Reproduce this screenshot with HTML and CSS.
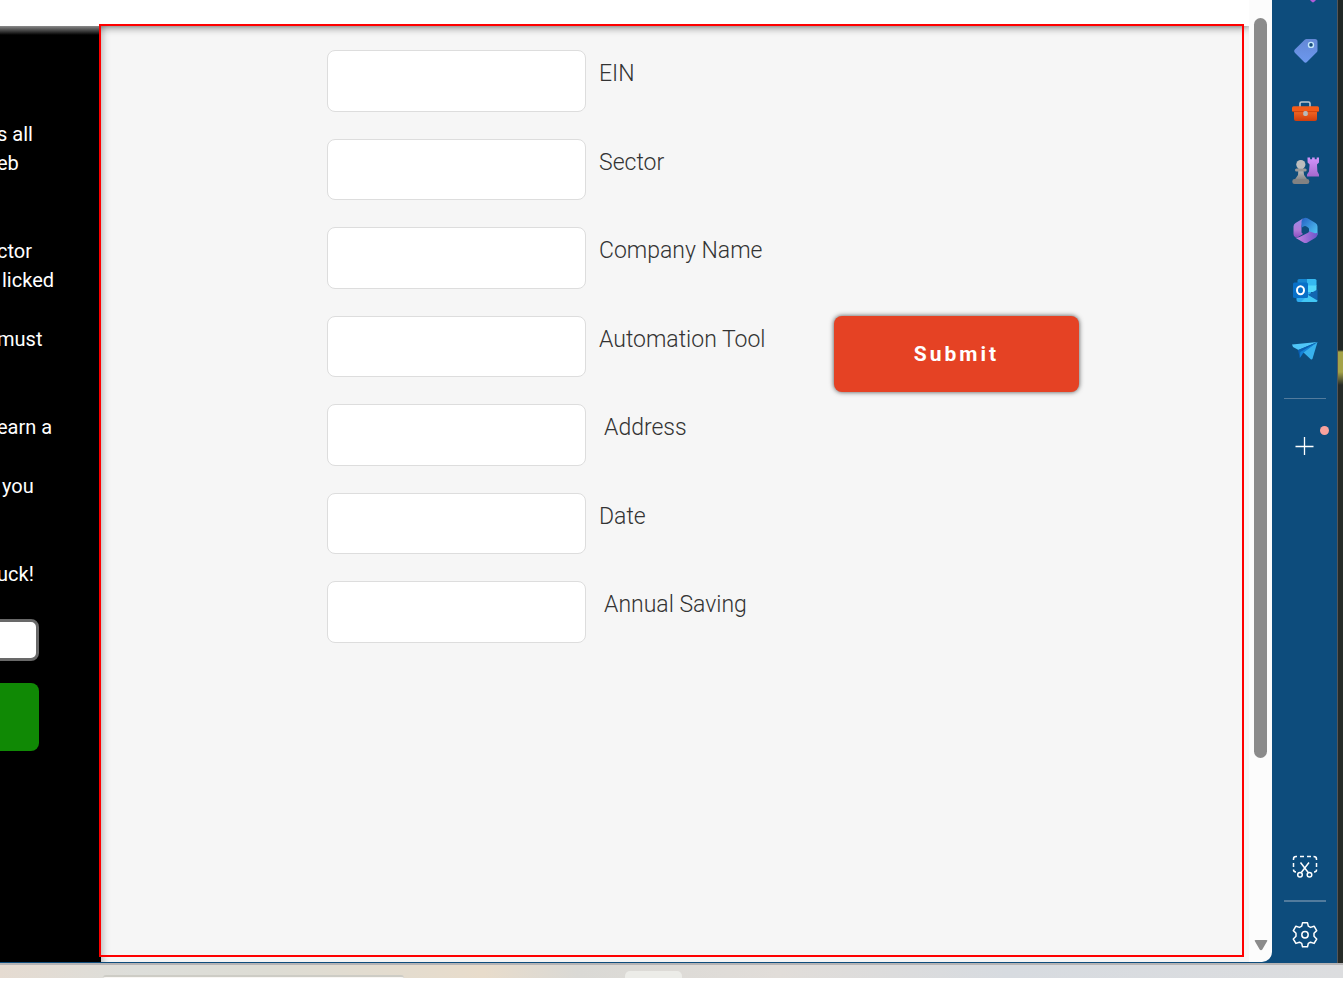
FILE: index.html
```html
<!DOCTYPE html>
<html lang="en">
<head>
<meta charset="utf-8">
<title>Automation Challenge</title>
<link rel="stylesheet" href="styles.css">
</head>
<body>
<div class="desktop">
  <div class="browser">
    <div class="page">
      <header class="page-header"></header>
      <div class="page-body">
        <aside class="instructions">
          <p>s all<br>eb</p>
          <p class="spaced">ctor<br><span class="word">licked</span></p>
          <p>must</p>
          <p class="spaced">earn a</p>
          <p><span class="word">you</span></p>
          <p class="spaced">uck!</p>
          <input class="answer" type="text" aria-label="Answer">
          <button class="start" type="button" aria-label="Start"></button>
        </aside>
        <main class="challenge">
          <form class="form">
            <input class="field" id="ein" type="text"><label class="label" for="ein">EIN</label>
            <input class="field" id="sector" type="text"><label class="label" for="sector">Sector</label>
            <input class="field" id="company" type="text"><label class="label" for="company">Company Name</label>
            <input class="field" id="tool" type="text"><label class="label" for="tool">Automation Tool</label>
            <input class="field" id="address" type="text"><label class="label indented" for="address">Address</label>
            <input class="field" id="date" type="text"><label class="label" for="date">Date</label>
            <input class="field" id="saving" type="text"><label class="label indented" for="saving">Annual Saving</label>
            <button class="submit" type="button">Submit</button>
          </form>
        </main>
      </div>
      <div class="highlight"></div>
    </div>
    <div class="scrollbar">
      <div class="thumb"></div>
      <svg class="arrow" viewBox="0 0 14 12"><path d="M1.500 1h11q1.400 0 .6 1.200L8.300 10.500q-1.300 1.600-2.600 0L.9 2.200Q.1 1 1.500 1z" fill="#8b8b8b"/></svg>
    </div>
    <nav class="sidebar">
      <button class="tool first" type="button" aria-label="Copilot"><svg viewBox="0 0 28 28"><path d="M18 23h8l-3 3q-1 .8-2 0z" fill="#b05cd8"/></svg></button>
      <button class="tool" type="button" aria-label="Shopping"><svg viewBox="0 0 28 28">
        <defs><linearGradient id="tag" x1="0" y1="0" x2="0" y2="1"><stop offset="0" stop-color="#6488d6"/><stop offset="1" stop-color="#6c98ee"/></linearGradient></defs>
        <path d="M15.500 3h8.500q2.500 0 2.500 2.500v9q0 1-.8 1.800l-9.500 9.500q-1.700 1.700-3.400 0l-9-9q-1.500-1.600 0-3.200l9.900-9.800q.8-.8 1.800-.8z" fill="url(#tag)"/><circle cx="20" cy="8.900" r="2.500" fill="#174c7b" stroke="#c5e8fa" stroke-width="1.400"/></svg></button>
      <button class="tool" type="button" aria-label="Tools"><svg viewBox="0 0 28 28">
        <defs><linearGradient id="box" x1="0" y1="0" x2="0" y2="1"><stop offset="0" stop-color="#f66c27"/><stop offset="1" stop-color="#cf3d0d"/></linearGradient></defs>
        <path d="M9 11V7.500q0-1.500 1.500-1.500h7q1.500 0 1.500 1.500V11" fill="none" stroke="#bdc5ca" stroke-width="1.600"/><path d="M3 14h23v9q0 2-2 2H5q-2 0-2-2z" fill="url(#box)"/><rect x="1" y="10.300" width="27" height="5.500" rx="1.500" fill="#f35b19"/><path d="M1.500 15.600h26" stroke="#c43d0b" stroke-width=".8"/><rect x="12.200" y="15" width="4.600" height="5" rx="1.700" fill="#b8babb"/></svg></button>
      <button class="tool" type="button" aria-label="Games"><svg viewBox="0 0 28 28">
        <defs><linearGradient id="pawn" x1="0" y1="0" x2="0" y2="1"><stop offset="0" stop-color="#cbcbcb"/><stop offset="1" stop-color="#858585"/></linearGradient><linearGradient id="rook" x1="0" y1="0" x2="0" y2="1"><stop offset="0" stop-color="#d395fc"/><stop offset="1" stop-color="#a568cd"/></linearGradient></defs>
        <path d="M16.500 1.500h2.600v1.800h2V1.500h2.600v1.800h2V1.500h2.300v5l-2 2 .4 7 1.600 3v2H16v-2l2-3 .6-7-2-2z" fill="url(#rook)"/><circle cx="9.800" cy="8.600" r="4.600" fill="#bdbdbd"/><path d="M7.500 12h4.600l1 7 3.500 5H3.500L7 19z" fill="url(#pawn)"/><rect x="4" y="12.500" width="11.700" height="3" rx="1.500" fill="#989898"/><rect x="1.300" y="23" width="17" height="5" rx="2.300" fill="#828282"/></svg></button>
      <button class="tool" type="button" aria-label="Microsoft 365"><svg viewBox="0 0 28 28">
        <defs><linearGradient id="ma" x1="0" y1="0" x2="0" y2="1"><stop offset="0" stop-color="#9b8ae6"/><stop offset=".6" stop-color="#b07bd8"/><stop offset="1" stop-color="#8c4ec0"/></linearGradient><linearGradient id="mb" x1="0" y1="0" x2="1" y2="1"><stop offset="0" stop-color="#2460c4"/><stop offset="1" stop-color="#56cdf7"/></linearGradient><linearGradient id="mc" x1="0" y1="0" x2="1" y2="0"><stop offset="0" stop-color="#cd87e2"/><stop offset="1" stop-color="#6d55c9"/></linearGradient></defs>
        <path d="M12 2.500 4.500 7Q2.500 8.200 2.500 10.500v7.500q0 2 1.500 3 2 1 4-.5l4-2.500-1.500-1.500v-6z" fill="url(#ma)"/><path d="M12.500 2.200q2-1 4 0L24.500 7q2 1.200 2 3.500v7q0 1.300-.8 2.300L18 15.500V13q0-1-1-1.600l-2-1.200q-1-.5-2 0l-2.500 1.500V5.500q0-2 2-3.300z" fill="url(#mb)"/><path d="m4 21.500 8.500 5q2 1.200 4 0l8-4.700q2-1.200 2-3.500v-2q-1.200 1.500-3.200.7L18 15.300q-.3 1-1 1.500L8.500 21Q6 22.200 4 21.500z" fill="url(#mc)"/></svg></button>
      <button class="tool" type="button" aria-label="Outlook"><svg viewBox="0 0 28 28">
        <path d="M6.500 4.500Q6.500 3 8 3h8v7H6.500z" fill="#1686d2"/><path d="M16 3h8q1.500 0 1.500 1.500V10H16z" fill="#35b9f1"/><path d="M16 9.500h9.500V16H16z" fill="#52d8fc"/><path d="M5.500 16H20l4 10H7.500q-2 0-2-2z" fill="#2eacf0"/><path d="M26.500 13.500v11.500L16.500 19z" fill="#1266b1"/><path d="m17 19 9.500 5.500q0 1.500-1.500 1.500H10z" fill="#42c8f5"/><rect x="2" y="6.500" width="15" height="15.500" rx="1.500" fill="#0870c8"/><ellipse cx="9.500" cy="14.200" rx="3.500" ry="4" fill="none" stroke="#fff" stroke-width="2"/></svg></button>
      <button class="tool" type="button" aria-label="Drop"><svg viewBox="0 0 28 28">
        <path d="M1 8.500 26.500 6 7.500 14 2 11z" fill="#4fc5f7"/><path d="M26.500 6 7 14l1.800 8 3.700-5z" fill="#0a60b3"/><path d="M26.500 6 12 16l8 7.500q1 .3 1.500-.7z" fill="#38b1ec"/><path d="m8.800 22 .5-6L26.500 6 12 17z" fill="#1583d5"/></svg></button>
      <hr class="rule upper">
      <button class="tool add" type="button" aria-label="Customize"><svg viewBox="0 0 28 28"><path d="M13.500 5v18M4.500 14.500h18" stroke="#fff" stroke-width="1.300"/></svg><span class="badge"></span></button>
      <button class="tool capture" type="button" aria-label="Screenshot"><svg viewBox="0 0 28 28" fill="none" stroke="#fff" stroke-width="1.500">
        <path d="M2.500 7V6q0-2.500 2.500-2.500h1M9 3.500h4M16 3.500h4M22.500 3.500Q25.500 3.500 25.500 6v1M25.500 10v4M25.500 16.500v.5q0 2-2.500 2M2.500 10v4M2.500 16.500q0 2.500 2.500 2.500"/><path d="m9.500 9.500 7.700 10M18 9.500l-7.700 10"/><circle cx="9" cy="21.700" r="2.300"/><circle cx="18.500" cy="21.700" r="2.300"/></svg></button>
      <hr class="rule lower">
      <button class="tool" type="button" aria-label="Settings"><svg viewBox="0 0 28 28" fill="none" stroke="#fff" stroke-width="1.500" stroke-linejoin="round"><path d="M11.500 1.800h5l.8 3.400 2.200 1.200 3.600-1.200 2.600 4.400-2.700 2.700v3l2.700 2.700-2.600 4.400-3.600-1.200-2.200 1.200-.8 3.400h-5l-.8-3.400-2.200-1.200-3.600 1.200L2.300 18l2.700-2.700v-3L2.300 9.600l2.600-4.400 3.600 1.200 2.200-1.200z"/><circle cx="14" cy="13.800" r="3.200"/></svg></button>
    </nav>
  </div>
  <div class="wallpaper"></div>
</div>
<footer class="taskbar">
  <div class="search"></div>
  <div class="task"></div>
</footer>
</body>
</html>
```
FILE: styles.css
```css
* {
  box-sizing: border-box;
}

body {
  margin: 0;
  height: 100vh;
  display: flex;
  flex-direction: column;
  overflow: hidden;
  background: #fff;
  font-family: Roboto, "Liberation Sans", sans-serif;
}

button {
  padding: 0;
  border: 0;
  font: inherit;
}

.desktop {
  flex: 1;
  min-height: 0;
  display: flex;
}

.browser {
  flex: 1;
  min-width: 0;
  display: flex;
  background: #0d4c7c;
  border-right: 1px solid #54565a;
}

.page {
  position: relative;
  flex: 1;
  min-width: 0;
  display: flex;
  flex-direction: column;
  margin-bottom: 1px;
}

.page-header {
  position: relative;
  z-index: 1;
  height: 26px;
  flex: none;
  background: #fff;
  box-shadow: 0 0 10px #000000b0;
  clip-path: inset(0 0 -12px 0);
}

.page-body {
  flex: 1;
  min-height: 0;
  display: flex;
}

.instructions {
  position: relative;
  z-index: 1;
  flex: none;
  width: 101px;
  padding-top: 94px;
  overflow: hidden;
  background: linear-gradient(#8a8a8a, #000 9px);
  color: #fff;
  font-size: 20px;
  line-height: 29px;
  white-space: nowrap;
  display: flex;
  flex-direction: column;
}

.instructions p {
  margin: 0 0 0 -3px;
}

.instructions p + p {
  margin-top: 30px;
}

.instructions p.spaced {
  margin-top: 59px;
}

.word {
  padding-left: 5px;
}

.answer {
  width: 49px;
  height: 42px;
  margin: 30px 0 22px -10px;
  border: 3px solid #696969;
  border-radius: 8px;
  background: #fff;
}

.start {
  width: 49px;
  height: 68px;
  margin-left: -10px;
  border-radius: 8px;
  background: #108905;
}

.challenge {
  flex: 1;
  min-width: 0;
  padding: 24px 0 0 226px;
  background: #f6f6f6;
  box-shadow: inset 8px 0 7px -6px #00000040;
}

.form {
  height: 593px;
  display: grid;
  grid-template-columns: 259px 222px 245px;
  grid-template-rows: repeat(7, minmax(0, 1fr));
  column-gap: 13px;
  row-gap: 27px;
}

.field {
  grid-column: 1;
  width: 100%;
  height: 100%;
  border: 1px solid #ddd;
  border-radius: 8px;
  background: #fff;
}

.label {
  grid-column: 2;
  padding-top: 9px;
  color: #333;
  font-size: 23px;
  font-weight: 300;
  line-height: 30px;
  white-space: nowrap;
}

.label.indented {
  padding-left: 5px;
}

.submit {
  grid-column: 3;
  grid-row: 4;
  height: 76px;
  border-radius: 8px;
  background: #e54224;
  box-shadow: 0 0 5px #000000b0;
  color: #fff;
  font-size: 21px;
  font-weight: 700;
  letter-spacing: 3px;
}

.highlight {
  position: absolute;
  z-index: 2;
  inset: 24px 5px 5px 99px;
  border: 2px solid #f00;
  pointer-events: none;
}

.scrollbar {
  flex: none;
  width: 23px;
  margin-bottom: 1px;
  padding: 18px 5px 11px;
  display: flex;
  flex-direction: column;
  gap: 181px;
  background: #fcfcfc;
  border-bottom-right-radius: 10px;
}

.thumb {
  flex: 1;
  width: 13px;
  border-radius: 7px;
  background: #8b8b8b;
}

.arrow {
  width: 14px;
  height: 12px;
}

.sidebar {
  flex: none;
  width: 65px;
  padding-bottom: 14px;
  overflow: hidden;
  display: flex;
  flex-direction: column;
  align-items: center;
}

.tool {
  position: relative;
  flex: none;
  width: 28px;
  height: 28px;
  margin-bottom: 32px;
  background: none;
}

.tool:last-child {
  margin-bottom: 0;
}

.tool.first {
  margin-top: -24px;
}

.tool svg {
  display: block;
  width: 28px;
  height: 28px;
}

.rule {
  width: 42px;
  margin: 0;
  border: 0;
  background: #527b9d;
}

.rule.upper {
  height: 1px;
  margin: 2px 0 33px;
}

.rule.lower {
  height: 2px;
  margin: 19px 0;
}

.badge {
  position: absolute;
  top: -6px;
  right: -10px;
  width: 9px;
  height: 9px;
  border-radius: 50%;
  background: #f8a29d;
}

.tool.capture {
  margin: auto 0 0;
}

.wallpaper {
  flex: none;
  width: 5px;
  background: linear-gradient(#202726 0 350px, #a4a348 352px 372px, #262b28 385px);
}

.taskbar {
  flex: none;
  height: 15px;
  margin-bottom: 3px;
  padding-left: 103px;
  display: flex;
  align-items: flex-end;
  justify-content: flex-start;
  gap: 221px;
  border-top: 2px solid #b5b3b4;
  background: linear-gradient(90deg, #e5dbd1, #dddeda 10%, #dddcd4 20%, #e8dccb 36%, #dad9d5 43%, #e1ddd9 58%, #d7dbe0 75%, #dcdddf);
}

.search {
  width: 301px;
  height: 3px;
  border-top: 2px solid #cdccc5;
  border-radius: 8px 8px 0 0;
  background: #f8f6f3;
}

.task {
  width: 57px;
  height: 7px;
  border-radius: 5px 5px 0 0;
  background: #ecece8;
}
```
